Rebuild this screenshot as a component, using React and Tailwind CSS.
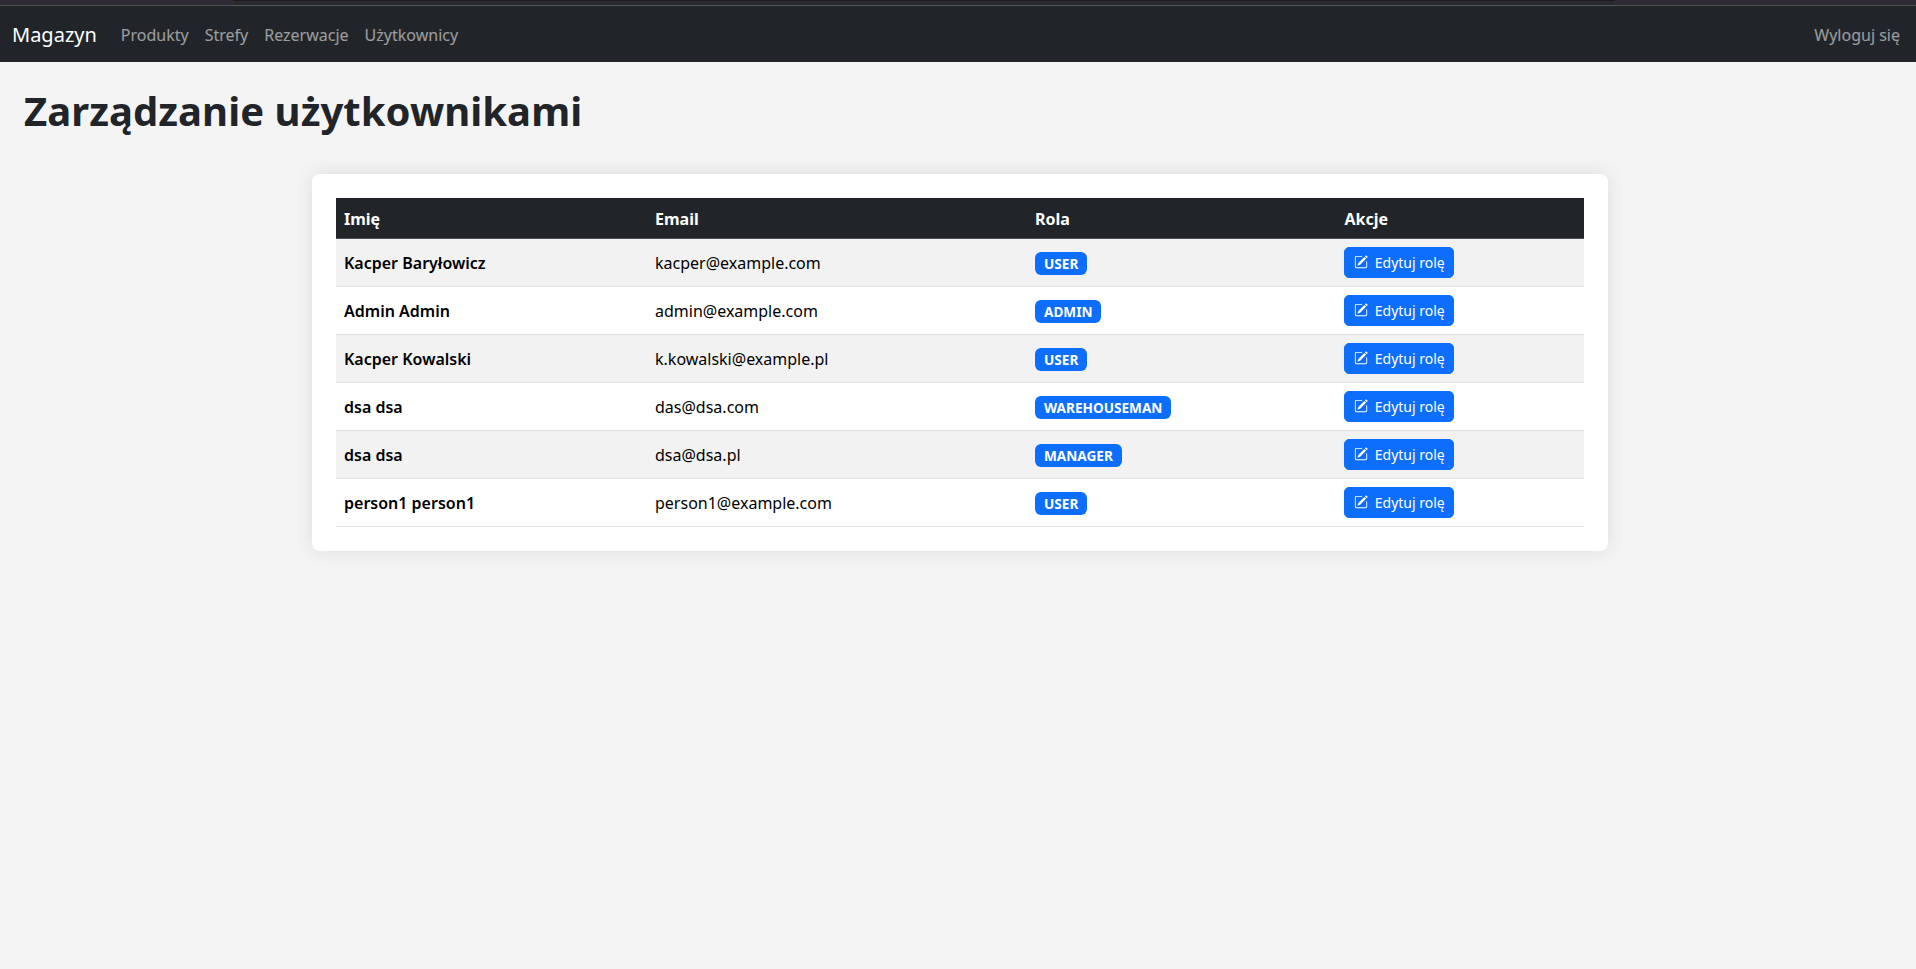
import { BsPencilSquare } from "react-icons/bs";

const users = [
  { name: "Kacper Baryłowicz", email: "kacper@example.com", role: "USER" },
  { name: "Admin Admin", email: "admin@example.com", role: "ADMIN" },
  { name: "Kacper Kowalski", email: "k.kowalski@example.pl", role: "USER" },
  { name: "dsa dsa", email: "das@dsa.com", role: "WAREHOUSEMAN" },
  { name: "dsa dsa", email: "dsa@dsa.pl", role: "MANAGER" },
  { name: "person1 person1", email: "person1@example.com", role: "USER" },
];

const links = ["Produkty", "Strefy", "Rezerwacje", "Użytkownicy"];

function Navbar() {
  return (
    <nav className="flex h-14 items-center bg-[#212529] px-3 pt-0.5 text-base text-white/55">
      <a href="#" className="mr-4 text-xl leading-[30px] text-white">Magazyn</a>
      <ul className="flex">
        {links.map((label) => (
          <li key={label}>
            <a href="#" className="block p-2">{label}</a>
          </li>
        ))}
      </ul>
      <a href="#" className="ml-auto py-2 pl-2 pr-1">Wyloguj się</a>
    </nav>
  );
}

function UserRow({ user }) {
  return (
    <tr className="h-12 odd:bg-[#f2f2f2] *:border-b *:border-[#dee2e6] *:px-2 *:py-0">
      <td className="font-semibold">{user.name}</td>
      <td>{user.email}</td>
      <td>
        <span className="ml-[0.2px] mt-0.5 flex h-[23px] w-fit items-center rounded-md bg-[#0d6efd] px-[8.84px] text-[13.6px] font-bold leading-none text-white">
          {user.role}
        </span>
      </td>
      <td>
        <button className="ml-[0.4px] flex h-[31px] items-center rounded-[5px] border border-[#0d6efd] bg-[#0d6efd] px-2 text-sm leading-[21px] text-white">
          <BsPencilSquare className="mb-0.5 ml-[0.4px] mr-[7px] size-3.5" />
          Edytuj rolę
        </button>
      </td>
    </tr>
  );
}

export default function App() {
  return (
    <div className="min-h-screen bg-[#f4f4f4] font-['Noto_Sans',sans-serif] text-base text-black">
      <div className="h-1.5 border-b border-[#505257] bg-[#2d2a36] pl-[233px]">
        <div className="h-[5px] w-[1382px] border-t border-[#1c1b20] bg-[#2a292e]" />
      </div>
      <Navbar />
      <h1 className="px-6 pt-[25px] text-[40px] font-bold leading-[48px] tracking-[0.06px] text-[#212529]">
        Zarządzanie użytkownikami
      </h1>
      <main className="ml-[312px] mt-[39px] w-[1296px] rounded-lg bg-white p-6 shadow-[0_0_20px_rgba(0,0,0,0.1)]">
        <table className="w-full table-fixed border-separate border-spacing-0 text-left">
          <colgroup>
            <col className="w-[311px]" />
            <col className="w-[380px]" />
            <col className="w-[309px]" />
            <col className="w-[248px]" />
          </colgroup>
          <thead>
            <tr className="h-[41px] bg-[#212529] text-white *:border-b *:border-[#4d5154] *:px-2 *:pb-0 *:pt-0.5">
              <th>Imię</th>
              <th>Email</th>
              <th>Rola</th>
              <th><span className="ml-[0.5px]">Akcje</span></th>
            </tr>
          </thead>
          <tbody>
            {users.map((user) => (
              <UserRow key={user.email} user={user} />
            ))}
          </tbody>
        </table>
      </main>
    </div>
  );
}
